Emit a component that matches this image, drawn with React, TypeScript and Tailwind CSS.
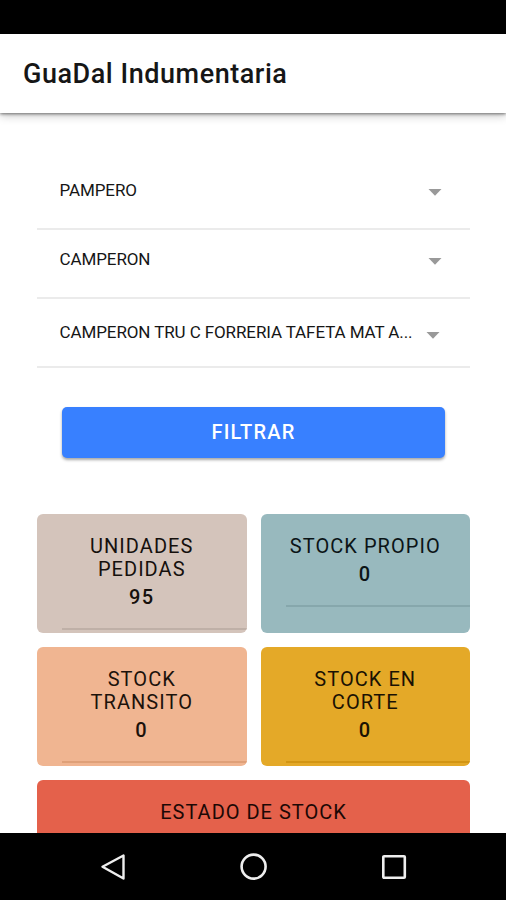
import React from "react";

type SelectRowProps = { label: string; className: string; caret: string };

function SelectRow({ label, className, caret }: SelectRowProps) {
  return (
    <div className={`flex h-[69px] items-start justify-between border-b-2 border-[#ebebeb] pl-[22.5px] ${className}`}>
      <span className="whitespace-nowrap text-[17px] leading-5 tracking-[-0.1px] text-[#161616]">{label}</span>
      <svg className={`h-[7px] w-[14px] shrink-0 ${caret}`} viewBox="0 0 14 7">
        <path d="M0.5 0h13L7 6.8z" fill="#999" />
      </svg>
    </div>
  );
}

type CardProps = { lines: string[]; value: string; color: string; text: string; rule: string };

function Card({ lines, value, color, text, rule }: CardProps) {
  return (
    <div className={`h-[118.5px] overflow-hidden rounded-md pt-[21px] ${color} ${text}`}>
      <div className="text-center text-[20px] leading-[23px] tracking-[1.05px]">
        {lines.map((line) => (
          <div key={line}>{line}</div>
        ))}
        <div className="mt-[5px] font-medium tracking-[1.4px]">{value}</div>
      </div>
      <div className={`ml-[25px] border-b-2 ${rule}`} />
    </div>
  );
}

export default function App() {
  return (
    <div className="flex h-[900px] w-[506px] flex-col overflow-hidden bg-white font-[Roboto,sans-serif]">
      <div className="h-[34px] shrink-0 bg-black" />
      <header className="z-10 flex h-[79px] shrink-0 items-center bg-white pl-[23px] shadow-[0_1px_3px_rgba(0,0,0,0.5),0_3px_9px_rgba(0,0,0,0.2)]">
        <h1 className="text-[27px] font-medium leading-8 tracking-[0.54px] text-[#161616]">GuaDal Indumentaria</h1>
      </header>

      <main className="min-h-0 flex-1 overflow-hidden px-[37px] pt-[48px]">
        <div className="w-[433px]">
          <SelectRow label="PAMPERO" className="pt-[19px]" caret="mr-[28px] mt-[9px]" />
          <SelectRow label="CAMPERON" className="pt-[19px]" caret="mr-[28px] mt-[9px]" />
          <SelectRow label="CAMPERON TRU C FORRERIA TAFETA MAT A..." className="pt-[23px]" caret="mr-[30px] mt-[10px]" />
        </div>

        <button className="ml-[25px] mt-[39px] flex h-[51px] w-[383px] items-center justify-center rounded-[5px] bg-[#3880ff] pb-[2px] text-[20px] font-medium tracking-[1.2px] text-white shadow-[0_2px_3px_rgba(0,0,0,0.35)]">
          FILTRAR
        </button>

        <div className="mt-[56px] grid w-[433px] grid-cols-2 gap-x-[14px] gap-y-[14.5px]">
          <Card lines={["UNIDADES", "PEDIDAS"]} value="95" color="bg-[#d4c4bb]" text="text-[#15100d]" rule="mt-[19px] border-[#bfb0a7]" />
          <Card lines={["STOCK PROPIO"]} value="0" color="bg-[#98b9be]" text="text-[#0b1416]" rule="mt-[19px] border-[#86a7ac]" />
          <Card lines={["STOCK", "TRANSITO"]} value="0" color="bg-[#f0b591]" text="text-[#1c120b]" rule="mt-[19px] border-[#dfa078]" />
          <Card lines={["STOCK EN", "CORTE"]} value="0" color="bg-[#e4a928]" text="text-[#1a1203]" rule="mt-[19px] border-[#d29513]" />
          <section className="col-span-2 h-[118px] rounded-md bg-[#e4614b] pt-[21px] text-center text-[20px] leading-[23px] tracking-[1px] text-[#1c0805]">
            ESTADO DE STOCK
          </section>
        </div>
      </main>

      <nav className="flex h-[67px] shrink-0 items-start justify-between bg-black pl-[100px] pr-[98px] pt-[20px]">
        <svg className="size-7" viewBox="0 0 28 28" fill="none" stroke="#eee" strokeWidth="2.4" strokeLinejoin="round">
          <path d="M23.5 2.5v23L2.5 13.7z" />
        </svg>
        <svg className="size-7" viewBox="0 0 28 28" fill="none" stroke="#eee" strokeWidth="2.6">
          <circle cx="13.6" cy="13.6" r="12" />
        </svg>
        <svg className="size-7" viewBox="0 0 28 28" fill="none" stroke="#eee" strokeWidth="2.6" strokeLinejoin="round">
          <rect x="3.3" y="3.3" width="21.5" height="21.5" rx="0.8" />
        </svg>
      </nav>
    </div>
  );
}
